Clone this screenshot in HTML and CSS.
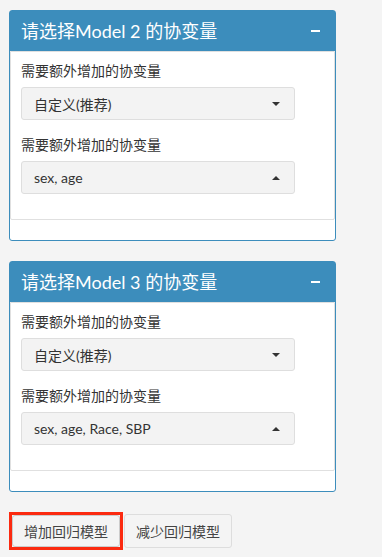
FILE: index.html
```html
<!DOCTYPE html>
<html lang="zh">
<head>
    <meta charset="UTF-8">
    <meta name="viewport" content="width=device-width, initial-scale=1.0">
    <title>回归模型协变量</title>
    <link rel="stylesheet" href="styles.css">
</head>
<body>
    <div class="content">
        <div class="box">
            <div class="box-header">
                <h3 class="box-title">请选择Model 2 的协变量</h3>
                <span class="collapse-btn"></span>
            </div>
            <div class="box-body">
                <div class="form-group">
                    <label>需要额外增加的协变量</label>
                    <div class="select">
                        <span>自定义(推荐)</span>
                        <span class="caret"></span>
                    </div>
                </div>
                <div class="form-group">
                    <label>需要额外增加的协变量</label>
                    <div class="select">
                        <span>sex, age</span>
                        <span class="caret up"></span>
                    </div>
                </div>
            </div>
        </div>

        <div class="box">
            <div class="box-header">
                <h3 class="box-title">请选择Model 3 的协变量</h3>
                <span class="collapse-btn"></span>
            </div>
            <div class="box-body">
                <div class="form-group">
                    <label>需要额外增加的协变量</label>
                    <div class="select">
                        <span>自定义(推荐)</span>
                        <span class="caret"></span>
                    </div>
                </div>
                <div class="form-group">
                    <label>需要额外增加的协变量</label>
                    <div class="select">
                        <span>sex, age, Race, SBP</span>
                        <span class="caret up"></span>
                    </div>
                </div>
            </div>
        </div>

        <div class="actions">
            <div class="focus-ring">
                <button class="btn">增加回归模型</button>
            </div>
            <button class="btn">减少回归模型</button>
        </div>
    </div>
</body>
</html>
```

FILE: styles.css
```css
body {
    font-family: Lato, "Noto Sans CJK SC", sans-serif;
    font-size: 14px;
    color: #333;
    background-color: #f4f4f4;
    margin: 0;
    padding: 0;
}
.content {
    padding: 10px 0 0 9px;
}
.box {
    width: 325px;
    background-color: #fff;
    border: 1px solid #3c8dbc;
    border-radius: 3px;
    margin-bottom: 20px;
    padding-bottom: 20px;
}
.box-header {
    display: flex;
    justify-content: space-between;
    align-items: center;
    height: 40px;
    padding: 0 15px 0 11px;
    background-color: #3c8dbc;
    color: #fff;
}
.box-title {
    margin: 0;
    font-size: 18px;
    font-weight: normal;
    line-height: 1;
}
.collapse-btn {
    width: 9px;
    height: 2px;
    background-color: #fff;
}
.box-body {
    border: 1px solid #e0e0e0;
    border-radius: 0 0 2px 2px;
    padding: 9px 10px 10px 10px;
}
.form-group {
    margin-bottom: 15px;
}
.form-group label {
    display: block;
    line-height: 20px;
    margin-bottom: 6px;
}
.select {
    display: flex;
    justify-content: space-between;
    align-items: center;
    height: 31px;
    padding: 0 14px 0 12px;
    box-sizing: content-box;
    width: 246px;
    background-color: #f3f3f3;
    border: 1px solid #dedede;
    border-radius: 3px;
}
.caret {
    width: 0;
    height: 0;
    border-left: 4px solid transparent;
    border-right: 4px solid transparent;
    border-top: 4px solid #333;
}
.caret.up {
    border-top: none;
    border-bottom: 4px solid #333;
}
.actions {
    display: flex;
    align-items: center;
    gap: 1px;
}
.focus-ring {
    display: flex;
    border: 3px solid #fb2a10;
}
.focus-ring .btn {
    height: 32px;
    border-color: #ccc;
}
.btn {
    font-family: Lato, "Noto Sans CJK SC", sans-serif;
    font-size: 14px;
    color: #444;
    background-color: #f4f4f4;
    border: 1px solid #ddd;
    border-radius: 3px;
    height: 34px;
    padding: 0 11px;
}
```
